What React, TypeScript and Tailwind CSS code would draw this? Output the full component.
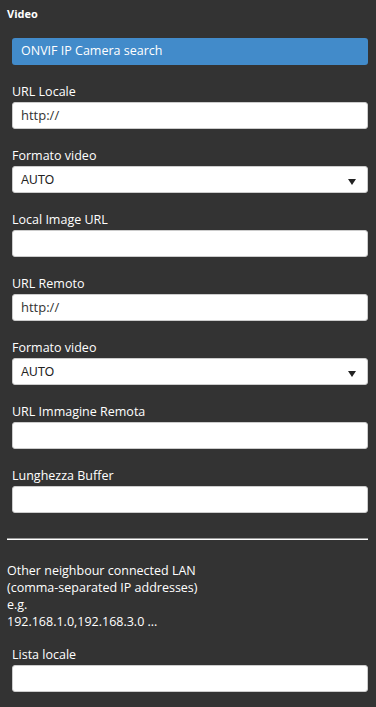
import React from "react";

const font = "font-['Open_Sans',_'Noto_Sans',_sans-serif]";

const Field = ({ label, value }: { label: string; value?: string }) => (
  <div className="flex flex-col pl-3 pr-2 pb-[17px]">
    <label className="text-[12.5px] leading-[20px] text-white">{label}</label>
    <div className="h-[27px] bg-white rounded-[3px] border border-[#ccc] flex items-center px-2 text-[13px] text-[#333]">
      {value}
    </div>
  </div>
);

const SelectField = ({ label, value }: { label: string; value: string }) => (
  <div className="flex flex-col pl-3 pr-2 pb-[17px]">
    <label className="text-[12.5px] leading-[20px] text-white">{label}</label>
    <div className="h-[27px] bg-white rounded-[3px] border border-[#ccc] flex items-center justify-between pl-2 pr-[11px]">
      <span className="text-[12px] text-[#222] font-['Liberation_Sans',_Arial,_sans-serif]">
        {value}
      </span>
      <svg width="8" height="6" viewBox="0 0 8 6" className="mt-[5px]">
        <polygon points="0,0 8,0 4,6" fill="#222" />
      </svg>
    </div>
  </div>
);

export default function App() {
  return (
    <div className={`w-[376px] h-[707px] bg-[#333333] overflow-hidden ${font}`}>
      {/* header */}
      <div className="h-[30px] pt-[6px] px-[7px] text-[11px] font-bold text-white">
        Video
      </div>

      <div className="pl-3 pr-2 pt-[8px] pb-[17px]">
        <div className="h-[27px] bg-[#428bca] rounded-[3px] flex items-center px-[9px] text-[12.5px] text-white">
          ONVIF IP Camera search
        </div>
      </div>

      <Field label="URL Locale" value="http://" />
      <SelectField label="Formato video" value="AUTO" />
      <Field label="Local Image URL" />
      <Field label="URL Remoto" value="http://" />
      <SelectField label="Formato video" value="AUTO" />
      <Field label="URL Immagine Remota" />
      <Field label="Lunghezza Buffer" />

      {/* divider */}
      <div className="pt-[8px] pl-[7px] pr-2">
        <div className="border-t border-t-[#999] border-b border-b-white" />
      </div>

      <div className="px-[7px] pt-[22px] text-[12.5px] leading-[17px] text-white">
        <div>Other neighbour connected LAN</div>
        <div>(comma-separated IP addresses)</div>
        <div>e.g.</div>
        <div>192.168.1.0,192.168.3.0 ...</div>
      </div>

      <div className="pt-[15px]">
        <Field label="Lista locale" />
      </div>
    </div>
  );
}
